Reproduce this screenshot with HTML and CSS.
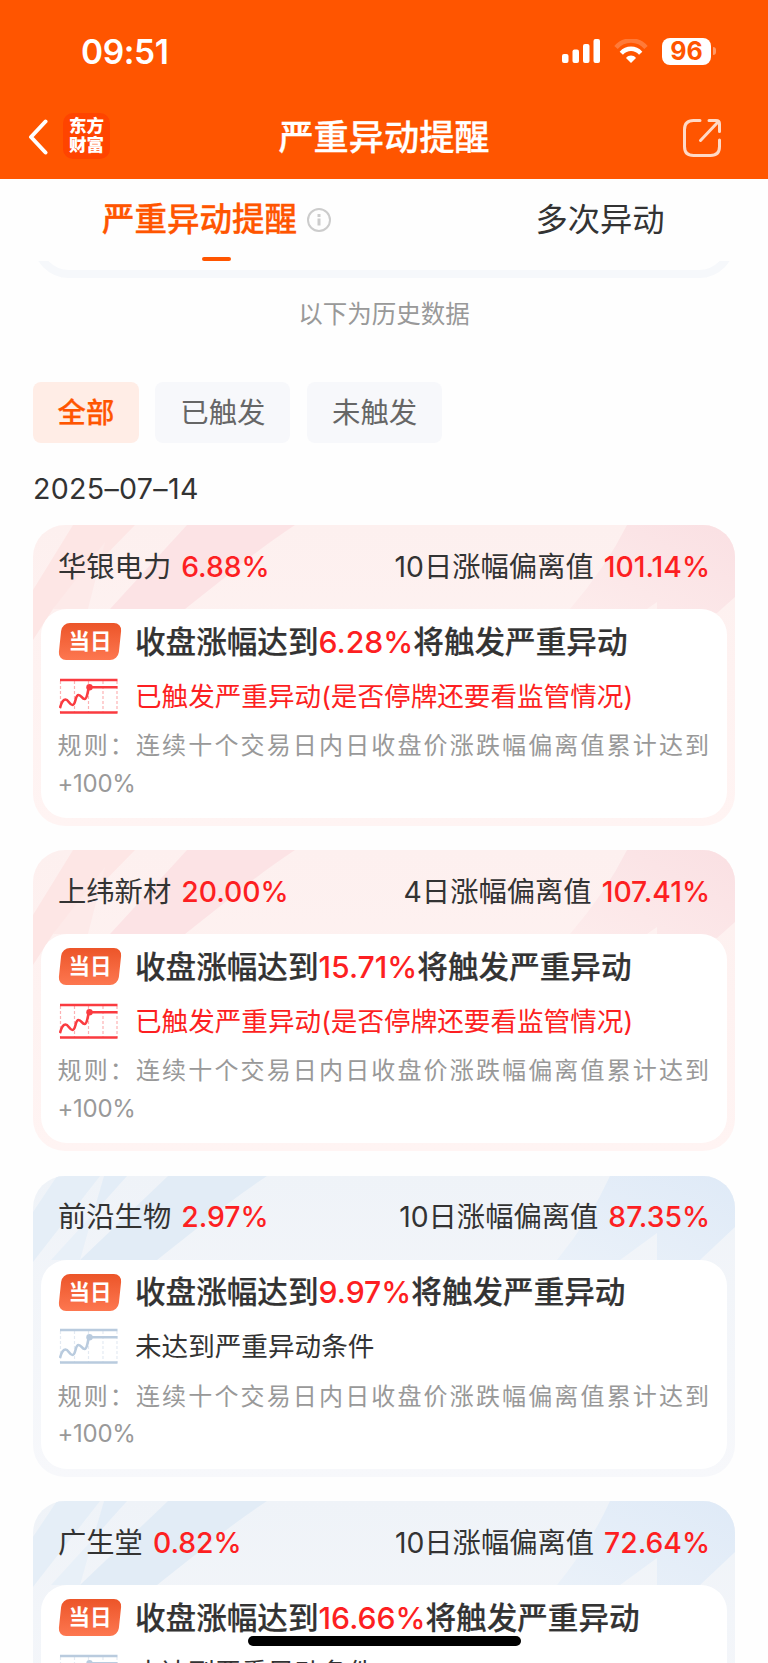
FILE: index.html
```html
<!DOCTYPE html>
<html lang="zh-CN">
<head>
    <meta charset="UTF-8">
    <meta name="viewport" content="width=device-width, initial-scale=1.0">
    <title>严重异动提醒</title>
    <link rel="stylesheet" href="styles.css">
</head>
<body>

    <!-- Shared shapes -->
    <svg class="hidden" xmlns="http://www.w3.org/2000/svg">
        <symbol id="chart" viewBox="0 0 59 37">
            <path d="M1.5 3v32M15.500 3v32M29.500 3v32M44 3v32M58 3v32" fill="none" stroke="currentColor" stroke-width="1.200" stroke-dasharray="3 2" opacity=".4"/>
            <path d="M1 2h57.500M1 34.500h57.500M30 9.200h28.500" fill="none" stroke="currentColor" stroke-width="2.400"/>
            <path d="M1 30C2 26 4 21.500 6.500 21.500c3 0 4 5.500 7 5.500 3.500 0 2.500-10 6-10 3 0 3.500 4 6 4 3 0 3-8 4.500-12" fill="none" stroke="currentColor" stroke-width="2.600"/>
            <circle cx="30.500" cy="9.200" r="3.200" fill="currentColor"/>
        </symbol>
        <symbol id="rays-up" viewBox="0 0 702 130">
            <path d="M40 0h62L20 84 0 115V65z" fill="#fde6e5"/>
            <path d="M72 17L55 84H20z" fill="#fdeae9"/>
            <path d="M154 0h108q-36 24-62 46l-48 38H77z" fill="#fce3e5"/>
            <path d="M594 0h108v72l-18 16-60-4v-7l-10 7h-77q36-42 57-84z" fill="url(#pink)"/>
        </symbol>
        <symbol id="rays-down" viewBox="0 0 702 130">
            <path d="M24 0h43L3 82l-3 4V36z" fill="#e5eef7"/>
            <path d="M71 0h23L60 38z" fill="#e3edf7"/>
            <path d="M60 38L47 84H18z" fill="#e8f0f8"/>
            <path d="M135 0h99q-36 24-62 46l-48 38H47z" fill="#e2ecf6"/>
            <path d="M577 0h125v51l-35 33h-43V57l-37 27h-63q34-42 53-84z" fill="url(#blue)"/>
        </symbol>
        <linearGradient id="pink" x1="0" y1="1" x2="1" y2="0">
            <stop offset="0" stop-color="#fdecec"/>
            <stop offset="1" stop-color="#fae0e3"/>
        </linearGradient>
        <linearGradient id="blue" x1="0" y1="1" x2="1" y2="0">
            <stop offset="0" stop-color="#eaf1f9"/>
            <stop offset="1" stop-color="#dfeaf7"/>
        </linearGradient>
    </svg>

    <header class="header">
        <div class="status-bar">
            <span class="time">09:51</span>
            <div class="status-icons">
                <svg width="39" height="24" viewBox="0 0 39 24" fill="#fff">
                    <rect x="0" y="15" width="6.500" height="9" rx="2"/>
                    <rect x="10.500" y="10.500" width="6.500" height="13.500" rx="2"/>
                    <rect x="21" y="5" width="6.500" height="19" rx="2"/>
                    <rect x="31.500" y="0" width="6.500" height="24" rx="2"/>
                </svg>
                <svg class="wifi" width="34" height="24" viewBox="0 0 34 24" fill="none" stroke="#fff">
                    <path d="M2 8.500C10-.8 24-.8 32 8.500" stroke-width="4.500" opacity=".22"/>
                    <path d="M7.300 14.200c5.500-5.800 13.900-5.800 19.400 0" stroke-width="4.500"/>
                    <path d="M12 19c3-3.200 7-3.200 10 0l-5 5z" fill="#fff" stroke="none"/>
                </svg>
                <span class="battery">96</span>
                <span class="battery-tip"></span>
            </div>
        </div>
        <div class="nav-bar">
            <div class="nav-left">
                <svg width="20" height="36" viewBox="0 0 20 36" fill="none" stroke="#fff" stroke-width="4" stroke-linecap="round" stroke-linejoin="round">
                    <path d="M17.500 2.500L3 18l14.500 15.500"/>
                </svg>
                <div class="logo">东方<br>财富</div>
            </div>
            <h1 class="title">严重异动提醒</h1>
            <svg class="share" width="40" height="40" viewBox="0 0 40 40" fill="none" stroke="#ffd9c6" stroke-width="3" stroke-linecap="round" stroke-linejoin="round">
                <path d="M18 2.500h-6.500q-9 0-9 9v17q0 9 9 9h17q9 0 9-9V22"/>
                <path d="M27 2.500h7q3.500 0 3.500 3.500v7.500M36 4L18.500 22.500"/>
            </svg>
        </div>
    </header>

    <nav class="tabs">
        <div class="tab active">
            <span>严重异动提醒</span>
            <svg width="26" height="26" viewBox="0 0 26 26" fill="none" stroke="#ccc" stroke-width="2">
                <circle cx="13" cy="13" r="11"/>
                <path d="M13 11.500v7" stroke-width="3"/>
                <path d="M13 7v3" stroke-width="3"/>
            </svg>
        </div>
        <div class="tab">多次异动</div>
    </nav>

    <!-- Bottom edge of the card scrolled under the tabs -->
    <div class="prev"><div class="prev-card"></div></div>

    <p class="history">以下为历史数据</p>

    <div class="filters">
        <button class="chip selected">全部</button>
        <button class="chip">已触发</button>
        <button class="chip">未触发</button>
    </div>

    <div class="date">2025–07–14</div>

    <main class="list">
        <section class="card up">
            <svg class="rays" viewBox="0 0 702 130"><use href="#rays-up"/></svg>
            <div class="card-head">
                <div>华银电力<b>6.88%</b></div>
                <div>10日涨幅偏离值<b>101.14%</b></div>
            </div>
            <div class="card-body">
                <div class="row main-row"><span class="tag"><i>当日</i></span><p>收盘涨幅达到<em>6.28%</em>将触发严重异动</p></div>
                <div class="row state"><svg class="chart"><use href="#chart"/></svg><p>已触发严重异动(是否停牌还要看监管情况)</p></div>
                <p class="rule">规则：连续十个交易日内日收盘价涨跌幅偏离值累计达到<br><span>+100%</span></p>
            </div>
        </section>

        <section class="card up">
            <svg class="rays" viewBox="0 0 702 130"><use href="#rays-up"/></svg>
            <div class="card-head">
                <div>上纬新材<b>20.00%</b></div>
                <div>4日涨幅偏离值<b>107.41%</b></div>
            </div>
            <div class="card-body">
                <div class="row main-row"><span class="tag"><i>当日</i></span><p>收盘涨幅达到<em>15.71%</em>将触发严重异动</p></div>
                <div class="row state"><svg class="chart"><use href="#chart"/></svg><p>已触发严重异动(是否停牌还要看监管情况)</p></div>
                <p class="rule">规则：连续十个交易日内日收盘价涨跌幅偏离值累计达到<br><span>+100%</span></p>
            </div>
        </section>

        <section class="card down">
            <svg class="rays" viewBox="0 0 702 130"><use href="#rays-down"/></svg>
            <div class="card-head">
                <div>前沿生物<b>2.97%</b></div>
                <div>10日涨幅偏离值<b>87.35%</b></div>
            </div>
            <div class="card-body">
                <div class="row main-row"><span class="tag"><i>当日</i></span><p>收盘涨幅达到<em>9.97%</em>将触发严重异动</p></div>
                <div class="row state"><svg class="chart"><use href="#chart"/></svg><p>未达到严重异动条件</p></div>
                <p class="rule">规则：连续十个交易日内日收盘价涨跌幅偏离值累计达到<br><span>+100%</span></p>
            </div>
        </section>

        <section class="card down">
            <svg class="rays" viewBox="0 0 702 130"><use href="#rays-down"/></svg>
            <div class="card-head">
                <div>广生堂<b>0.82%</b></div>
                <div>10日涨幅偏离值<b>72.64%</b></div>
            </div>
            <div class="card-body">
                <div class="row main-row"><span class="tag"><i>当日</i></span><p>收盘涨幅达到<em>16.66%</em>将触发严重异动</p></div>
                <div class="row state"><svg class="chart"><use href="#chart"/></svg><p>未达到严重异动条件</p></div>
            </div>
        </section>
    </main>

    <div class="home-indicator"></div>

</body>
</html>
```

FILE: styles.css
```css
* {
    box-sizing: border-box;
}

body {
    margin: 0;
    height: 1663px;
    overflow: hidden;
    background-color: #fefefe;
    color: #333;
    font-family: Inter, "Noto Sans CJK SC", sans-serif;
    font-weight: 400;
}

p, h1 {
    margin: 0;
}

.hidden {
    position: absolute;
    width: 0;
    height: 0;
}

/* Header */
.header {
    height: 179px;
    background-color: #ff5500;
    color: #fff;
}

.status-bar {
    display: flex;
    justify-content: space-between;
    align-items: center;
    height: 102px;
    padding: 0 52px 0 81px;
}

.time {
    padding-top: 1px;
    font-size: 33.5px;
    font-weight: 600;
    letter-spacing: -0.4px;
}

.status-icons {
    display: flex;
    align-items: center;
}

.wifi {
    margin: 0 14px 0 13px;
}

.battery {
    width: 49px;
    height: 27px;
    border-radius: 8px;
    background-color: #fff;
    color: #ff5500;
    font-size: 25px;
    font-weight: 700;
    line-height: 27px;
    text-align: center;
}

.battery-tip {
    width: 3px;
    height: 8px;
    margin-left: 2px;
    border-radius: 0 3px 3px 0;
    background-color: #ff9966;
}

.nav-bar {
    display: grid;
    grid-template-columns: 1fr auto 1fr;
    align-items: center;
    height: 70px;
    padding: 0 46px 0 28px;
}

.nav-left {
    display: flex;
    align-items: center;
    gap: 15px;
}

.logo {
    width: 47px;
    height: 46px;
    margin-top: -2px;
    padding-top: 3px;
    border-radius: 10px;
    background-color: #ff4400;
    font-size: 17.5px;
    font-weight: 900;
    line-height: 19px;
    text-align: center;
}

.title {
    margin-left: -18px;
    transform: translateX(18px);
    font-size: 35.2px;
    font-weight: 500;
    line-height: 50px;
    -webkit-text-stroke: 0.3px;
}

.share {
    justify-self: end;
    margin-top: 2px;
}

/* Tabs */
.tabs {
    display: grid;
    grid-template-columns: 432px 1fr;
    height: 82px;
    font-size: 32.3px;
    line-height: 82px;
}

.tab {
    text-align: center;
}

.tab.active {
    display: flex;
    flex-wrap: wrap;
    justify-content: center;
    align-items: center;
    column-gap: 9px;
    padding-left: 2px;
    color: #ff5500;
    font-size: 32.5px;
    font-weight: 500;
}

.tab.active span {
    -webkit-text-stroke: 0.3px;
}

.tab.active::after {
    content: "";
    flex: 0 0 29px;
    height: 4px;
    margin: -4px 201px 0 200px;
    border-radius: 2px;
    background-color: #ff5500;
}

.prev {
    display: flex;
    align-items: flex-end;
    height: 17px;
    padding: 0 33px;
    overflow: hidden;
}

.prev-card {
    flex: 1;
    height: 90px;
    border: 8px solid #f6f8fb;
    border-radius: 36px;
}

.history {
    padding-top: 16px;
    color: #999;
    font-size: 24.5px;
    line-height: 40px;
    text-align: center;
}

/* Filters */
.filters {
    display: flex;
    gap: 16.5px;
    padding: 48px 33px 0;
}

.chip {
    height: 60.5px;
    padding: 0 25px 3px;
    border: none;
    border-radius: 8px;
    background-color: #f7f8fb;
    color: #666;
    font-family: inherit;
    font-size: 28.4px;
}

.chip.selected {
    padding: 0 24.5px 3px;
    background-color: #ffede6;
    color: #ff5500;
    font-weight: 500;
    -webkit-text-stroke: 0.25px;
}

.date {
    padding: 25.5px 33px 0;
    font-size: 28.6px;
    letter-spacing: 0.3px;
    line-height: 42px;
}

/* Cards */
.list {
    padding: 15px 33px 0;
}

.card {
    position: relative;
    height: 301px;
    margin-bottom: 24.4px;
    border-radius: 32px;
    overflow: hidden;
}

.card.up {
    background: linear-gradient(#fdf0ef, #fff4f3);
}

.card.down {
    background: linear-gradient(#eff3f8, #f7f8fb);
}

.rays {
    position: absolute;
    top: 0;
    left: 0;
    width: 702px;
    height: 130px;
}

.card-head {
    position: relative;
    display: flex;
    justify-content: space-between;
    align-items: center;
    height: 84px;
    padding: 0 25px 6px;
    font-size: 28.3px;
}

.card-head b {
    margin-left: 10px;
    color: #fd1f22;
    font-weight: 500;
}

.card-body {
    position: relative;
    height: 209px;
    margin: 0 8px;
    padding: 11px 16px 0;
    border-radius: 26px;
    background-color: #fff;
}

.row {
    display: flex;
    align-items: center;
}

.row p {
    padding-bottom: 4px;
}

.main-row {
    height: 43px;
    font-size: 30.6px;
    font-weight: 500;
    white-space: nowrap;
    -webkit-text-stroke: 0.2px;
}

.main-row em {
    color: #fd1f22;
    font-size: 30.2px;
    font-style: normal;
    -webkit-text-stroke: 0;
}

.tag {
    width: 60px;
    height: 37px;
    margin: 0 15px 0 3px;
    border-radius: 8px;
    background: linear-gradient(#ec5529, #fd7750);
    color: #fff;
    font-size: 21.5px;
    font-weight: 700;
    line-height: 36px;
    text-align: center;
    transform: skewX(-6deg);
    -webkit-text-stroke: 0;
}

.tag i {
    display: block;
    font-style: normal;
    transform: skewX(6deg);
}

.state {
    height: 44px;
    margin-top: 11px;
    font-size: 26.6px;
}

.up .state {
    color: #fd1f22;
}

.chart {
    width: 59px;
    height: 37px;
    margin: 0 17px 0 2px;
}

.up .chart {
    color: #fa3b40;
}

.down .chart {
    color: #b9cbde;
}

.rule {
    margin-top: 9px;
    padding-left: 0.5px;
    color: #999;
    font-size: 24px;
    letter-spacing: 2.15px;
    line-height: 37.5px;
    white-space: nowrap;
}

.rule span {
    letter-spacing: -0.3px;
}

.home-indicator {
    position: fixed;
    left: 248px;
    bottom: 17px;
    width: 273px;
    height: 10px;
    border-radius: 5px;
    background-color: #000;
}
```
